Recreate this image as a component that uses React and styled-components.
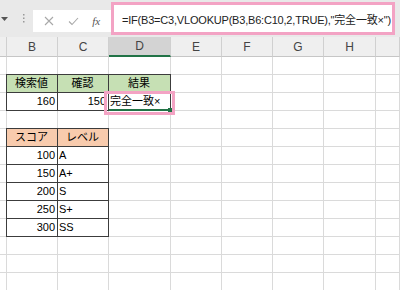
import React from "react";
import styled, { createGlobalStyle } from "styled-components";

const GlobalStyle = createGlobalStyle`
  *, *::before, *::after { box-sizing: border-box; }
  body {
    margin: 0;
    background: #fff;
    font-family: "Liberation Sans", "Noto Sans CJK JP", sans-serif;
  }
`;

const PINK = "#f3a3c4";
const DARK = "#3c3c3c";
const GRID = "#dadada";

const COLS = [7, 51, 51, 62, 51, 51, 51, 52, 24];
const LETTERS = ["", "B", "C", "D", "E", "F", "G", "H", ""];

const Sheet = styled.div`
  width: 400px;
  height: 290px;
  overflow: hidden;
  display: flex;
  flex-direction: column;
  background: #fff;
`;

const FormulaBar = styled.div`
  height: 37px;
  flex-shrink: 0;
  background: #e9e9e9;
  display: flex;
  align-items: flex-start;
  padding: 2px 5px 2px 0;
`;

const NameBoxEnd = styled.div`
  width: 14px;
  height: 33px;
  display: flex;
  align-items: center;
  padding-left: 1px;
`;

const Divider = styled.div`
  width: 19px;
  height: 33px;
  display: flex;
  align-items: center;
  justify-content: center;
`;

const IconBox = styled.div`
  width: 78px;
  height: 22px;
  margin-top: 8px;
  background: #fff;
  display: flex;
  align-items: center;
  justify-content: space-around;
  padding: 0 4px;
`;

const Fx = styled.span`
  font-family: "Liberation Serif", serif;
  font-style: italic;
  font-size: 11px;
  color: #555;
`;

const FormulaInput = styled.div`
  flex: 1;
  height: 33px;
  border: 3px solid ${PINK};
  background: #fff;
  display: flex;
  align-items: center;
  padding-left: 8px;
  font-size: 11px;
  letter-spacing: -0.2px;
  color: #222;
  white-space: nowrap;
  overflow: hidden;
`;

const Grid = styled.div`
  display: grid;
  grid-template-columns: ${COLS.map((c) => c + "px").join(" ")};
  grid-template-rows: 20px repeat(13, 18px);
`;

const HeadCell = styled.div`
  background: ${(p) => (p.$active ? "#d3d3d3" : "#efefef")};
  border-right: 1px solid #d0d0d0;
  border-bottom: ${(p) => (p.$active ? "2px solid #217346" : "1px solid #c6c6c6")};
  color: #444;
  font-size: 12px;
  display: flex;
  align-items: center;
  justify-content: center;
`;

const Cell = styled.div`
  position: ${(p) => (p.$selected ? "relative" : "static")};
  background: ${(p) => p.$bg || "#fff"};
  border-right: 1px solid ${(p) => (p.$dark ? DARK : GRID)};
  border-bottom: 1px solid ${(p) => (p.$dark ? DARK : GRID)};
  box-shadow: ${(p) =>
    p.$dark ? `-1px 0 0 ${DARK}, 0 -1px 0 ${DARK}, -1px -1px 0 ${DARK}` : "none"};
  font-size: 11px;
  line-height: 17px;
  padding: 0 2px 0 1px;
  text-align: ${(p) => p.$align || "left"};
  white-space: nowrap;
  color: #000;
`;

const Selection = styled.div`
  position: absolute;
  left: 0;
  right: 0;
  bottom: -1px;
  height: 2px;
  background: #217346;

  &::after {
    content: "";
    position: absolute;
    right: -2px;
    bottom: -1px;
    width: 4px;
    height: 4px;
    background: #217346;
  }
`;

const Highlight = styled.div`
  position: absolute;
  left: -5px;
  right: -5px;
  top: -2px;
  bottom: -5px;
  border: 3px solid ${PINK};
  pointer-events: none;
`;

const GREEN = "#c6e0b4";
const PEACH = "#f8cbad";

// row data: [B, C, D] for each of the 13 rows
const rows = [
  {},
  { cells: [["検索値", "center"], ["確認", "center"], ["結果", "center"]], bg: GREEN },
  { cells: [["160", "right"], ["150", "right"], ["完全一致×", "left", true]] },
  {},
  { cells: [["スコア", "center"], ["レベル", "center"]], bg: PEACH },
  { cells: [["100", "right"], ["A", "left"]] },
  { cells: [["150", "right"], ["A+", "left"]] },
  { cells: [["200", "right"], ["S", "left"]] },
  { cells: [["250", "right"], ["S+", "left"]] },
  { cells: [["300", "right"], ["SS", "left"]] },
  {},
  {},
  {},
];

function XIcon() {
  return (
    <svg width="10" height="10" viewBox="0 0 10 10">
      <path d="M1 1L9 9M9 1L1 9" stroke="#a8a8a8" strokeWidth="1.1" fill="none" />
    </svg>
  );
}

function CheckIcon() {
  return (
    <svg width="11" height="9" viewBox="0 0 11 9">
      <path d="M1 4.5L4 7.5L10 1" stroke="#a8a8a8" strokeWidth="1.1" fill="none" />
    </svg>
  );
}

export default function App() {
  return (
    <Sheet>
      <GlobalStyle />
      <FormulaBar>
        <NameBoxEnd>
          <svg width="7" height="4" viewBox="0 0 7 4">
            <path d="M0 0H7L3.5 4Z" fill="#555" />
          </svg>
        </NameBoxEnd>
        <Divider>
          <svg width="2" height="9" viewBox="0 0 2 9">
            <rect x="0" y="0" width="1.5" height="1.5" fill="#999" />
            <rect x="0" y="3.5" width="1.5" height="1.5" fill="#999" />
            <rect x="0" y="7" width="1.5" height="1.5" fill="#999" />
          </svg>
        </Divider>
        <IconBox>
          <XIcon />
          <CheckIcon />
          <Fx>fx</Fx>
        </IconBox>
        <FormulaInput>=IF(B3=C3,VLOOKUP(B3,B6:C10,2,TRUE),"完全一致×")</FormulaInput>
      </FormulaBar>
      <Grid>
        {LETTERS.map((l, i) => (
          <HeadCell key={"h" + i} $active={l === "D"}>
            {l}
          </HeadCell>
        ))}
        {rows.map((row, r) =>
          COLS.map((_, c) => {
            const data = row.cells && row.cells[c - 1];
            if (!data) return <Cell key={r + "-" + c} />;
            const [text, align, selected] = data;
            return (
              <Cell key={r + "-" + c} $dark $bg={row.bg} $align={align} $selected={selected}>
                {text}
                {selected && <Selection />}
                {selected && <Highlight />}
              </Cell>
            );
          })
        )}
      </Grid>
    </Sheet>
  );
}
